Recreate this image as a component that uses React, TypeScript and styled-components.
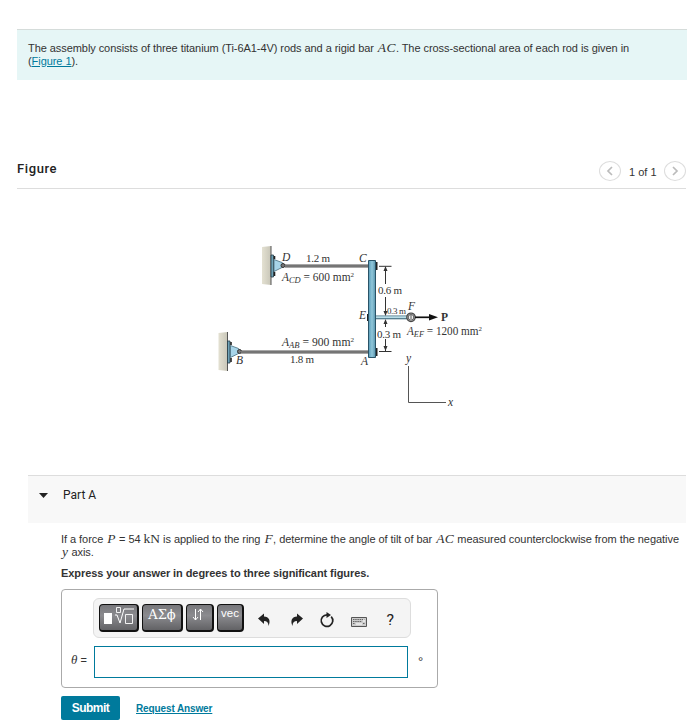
import React, { useState } from 'react';
import styled, { createGlobalStyle } from 'styled-components';

const GlobalStyle = createGlobalStyle`
  body {
    margin: 0;
    background: #fff;
    color: #333;
    font-family: "Liberation Sans", Arial, sans-serif;
    font-size: 11px;
  }
  * {
    box-sizing: border-box;
  }
`;

const Page = styled.main`
  width: 696px;
  height: 725px;
  padding: 29px 9px 0 17px;
  overflow: hidden;
`;

const Intro = styled.section`
  height: 51px;
  padding: 12px 11px 0;
  border-top: 1px solid #d5dcda;
  background: #e6f6f6;
`;

const Line = styled.div<{ $spacing?: number }>`
  height: 13px;
  line-height: 13px;
  white-space: nowrap;
  letter-spacing: ${({ $spacing = -0.065 }) => $spacing}px;
`;

const Var = styled.i`
  margin-left: 1px;
  font-family: "Liberation Serif", "Times New Roman", serif;
  font-size: 13.5px;
  line-height: 1px;
  letter-spacing: 0.4px;
`;

const Unit = styled(Var)`
  margin: 0;
  font-style: normal;
  letter-spacing: 0;
`;

const Link = styled.a`
  color: #007a9c;
  text-decoration: underline;
`;

const FigureHeader = styled.header`
  display: flex;
  justify-content: space-between;
  height: 109px;
  margin-right: 1px;
  padding-top: 80px;
  border-bottom: 1px solid #ddd;
`;

const FigureTitle = styled.h2`
  margin: 1px 0 0;
  color: #222;
  font-family: Roboto, sans-serif;
  font-size: 13px;
  font-weight: 500;
  line-height: 16px;
  letter-spacing: 0.6px;
`;

const Pager = styled.nav`
  display: flex;
  align-items: center;
  height: 22px;
  gap: 8px;
`;

const PagerButton = styled.button`
  display: flex;
  align-items: center;
  justify-content: center;
  width: 22px;
  height: 20px;
  padding: 0;
  border: 1px solid #ddd;
  border-radius: 50%;
  background: #fff;
`;

const PagerText = styled.span`
  width: 27px;
  padding-top: 2px;
  white-space: nowrap;
`;

const Diagram = styled.svg`
  display: block;
  width: 670px;
  height: 286px;
  font-family: "Liberation Serif", "Times New Roman", serif;
  font-size: 11.5px;
`;

const PartHeader = styled.header`
  display: flex;
  align-items: flex-start;
  width: 658px;
  height: 48px;
  margin-left: 11px;
  padding: 12px 0 0 11px;
  border-top: 1px solid #ddd;
  background: #f8f8f8;
`;

const PartTitle = styled.h2`
  margin: 0 0 0 15px;
  color: #222;
  font-family: Roboto, sans-serif;
  font-size: 12px;
  font-weight: 400;
  line-height: 14px;
`;

const PartBody = styled.section`
  padding: 10px 0 0 44px;
`;

const Instruction = styled.p`
  margin: 8px 0 9px;
  font-weight: 700;
  line-height: 13px;
  letter-spacing: -0.08px;
`;

const AnswerBox = styled.div`
  width: 377px;
  height: 99px;
  padding: 8px 0 0 9px;
  border: 1px solid #aaa;
  border-radius: 4px;
`;

const Toolbar = styled.div`
  display: flex;
  align-items: flex-start;
  gap: 3px;
  width: 318px;
  height: 40px;
  margin-left: 22px;
  padding: 5px;
  border: 1px solid #ddd;
  border-radius: 6px;
  background: #f4f4f4;
`;

const ToolButton = styled.button<{ $width: number; $serif?: boolean }>`
  display: flex;
  justify-content: center;
  width: ${({ $width }) => $width}px;
  height: 28px;
  padding: 2px 0 0;
  border: 1px solid #111;
  border-width: 1px 2px 2px 1px;
  border-radius: 4px;
  background: linear-gradient(#77777b, #8b8b8f 42%, #626265);
  color: #fff;
  font-family: ${({ $serif }) => ($serif ? '"DejaVu Serif", serif' : '"Liberation Sans", sans-serif')};
  font-size: ${({ $serif }) => ($serif ? 13 : 11.5)}px;
  line-height: ${({ $serif }) => ($serif ? 16 : 13)}px;
`;

const ToolIcons = styled.div`
  width: 144px;
  height: 28px;
  margin-left: 8px;
  padding-top: 6px;
`;

const InputRow = styled.label`
  display: flex;
  align-items: center;
  height: 32px;
  margin-top: 8px;
`;

const InputLabel = styled.span`
  width: 23px;
  padding-bottom: 4px;
  white-space: nowrap;
`;

const Theta = styled(Var)`
  margin: 0;
  font-size: 13px;
  letter-spacing: 0;
`;

const AnswerInput = styled.input`
  width: 314px;
  height: 32px;
  padding: 0 6px;
  border: 1px solid #007a9c;
  outline: 0;
  background: #fff;
`;

const Degree = styled.span`
  margin: -2px 0 0 10px;
  font-size: 13px;
`;

const Actions = styled.div`
  display: flex;
  align-items: center;
  gap: 16px;
  height: 24px;
  margin-top: 8px;
`;

const SubmitButton = styled.button`
  width: 59px;
  height: 24px;
  padding: 0;
  border: 0;
  border-radius: 2px;
  background: #007a9c;
  color: #fff;
  font-family: "Liberation Sans", sans-serif;
  font-size: 12px;
  font-weight: 700;
  letter-spacing: -0.5px;
`;

const RequestLink = styled(Link)`
  font-size: 10px;
  font-weight: 700;
  letter-spacing: -0.12px;
`;

const Chevron = ({ flip }: { flip?: boolean }) => (
  <svg width="8" height="10" viewBox="0 0 8 10" fill="none" stroke="#bbb" strokeWidth="1.7">
    <path d={flip ? 'M2 1l4 4-4 4' : 'M6 1L2 5l4 4'} />
  </svg>
);

const Support = ({ x, y }: { x: number; y: number }) => (
  <g transform={`translate(${x} ${y})`}>
    <path d="M0 1L9 0v39L0 38z" fill="url(#wall)" />
    <path d="M9 0v39" stroke="#555" />
    <path d="M9 9h2.5v22H9z" fill="#6fa3b8" stroke="#263b45" strokeWidth=".8" />
    <path d="M12.5 10v3m0 13v4" stroke="#222" strokeWidth="1.6" />
    <path d="M12 13.5l8 3q4 3 0 5l-8 4z" fill="#a7d4e8" stroke="#456c7d" strokeWidth=".8" />
    <circle cx="21" cy="19.5" r="2" fill="#777" stroke="#333" />
  </g>
);

type AreaProps = { x: number; y: number; sub: string; value: string; width: number };

const AreaLabel = ({ x, y, sub, value, width }: AreaProps) => (
  <text x={x} y={y} textLength={width} lengthAdjust="spacingAndGlyphs">
    <tspan fontStyle="italic">A</tspan>
    <tspan fontStyle="italic" fontSize="8.5" dy="2">{sub}</tspan>
    <tspan dy="-2">{` = ${value} mm`}</tspan>
    <tspan fontSize="7" dy="-4">2</tspan>
  </text>
);

const RodDiagram = () => (
  <Diagram viewBox="17 189 670 286" fill="#333">
    <defs>
      <linearGradient id="wall"><stop stopColor="#e4e1d2" /><stop offset="1" stopColor="#c8c6b8" /></linearGradient>
      <linearGradient id="bar"><stop stopColor="#569ab7" /><stop offset=".5" stopColor="#91c7da" /><stop offset="1" stopColor="#5794ad" /></linearGradient>
    </defs>
    <Support x={262} y={246} />
    <Support x={218.5} y={332} />
    <path d="M285 266h83M241 352h127" stroke="#505050" strokeWidth="3.2" />
    <path d="M285 266h83M241 352h127" stroke="#999" strokeWidth="1.2" />
    <path d="M375 262h2.5v8H375zM375 348h2.5v8H375zM367 314h2v7h-2z" fill="#222" />
    <path d="M368.5 260.5h7v97h-7z" fill="url(#bar)" stroke="#2a5367" />
    <path d="M376 317.4h32" stroke="#456f81" strokeWidth="3.8" />
    <path d="M376 317.2h32" stroke="#b8dce7" strokeWidth="1.9" />
    <circle cx="411" cy="317.3" r="3.6" fill="#eee" stroke="#444" strokeWidth="2.5" />
    <circle cx="411" cy="317.3" r="3.4" fill="none" stroke="#aaa" strokeWidth=".8" />
    <path d="M411 315v4" stroke="#555" />
    <path d="M415 317.3h15" stroke="#111" strokeWidth="1.7" />
    <path d="M429 314l9 3.3-9 3.3z" fill="#111" />
    <path d="M379 266.3h12.5M379 351.5h12.5M385.5 267v17M385.5 297v18M385.5 320v7M385.5 339v12" stroke="#333" fill="none" />
    <path d="M385.5 266l-2 5h4zM385.5 316l-2-5h4zM385.5 319l-2 5h4zM385.5 351l-2-5h4z" />
    <path d="M408.5 366v36.5H446" fill="none" stroke="#555" />
    <g fontStyle="italic">
      <text x="282" y="261">D</text>
      <text x="359" y="262">C</text>
      <text x="359" y="319">E</text>
      <text x="236" y="364">B</text>
      <text x="361" y="365">A</text>
      <text x="408" y="310">F</text>
      <text x="406" y="362">y</text>
      <text x="448" y="405.5">x</text>
    </g>
    <g fontSize="11">
      <text x="306" y="262" textLength="24">1.2 m</text>
      <text x="290" y="363" textLength="24">1.8 m</text>
      <text x="378" y="294" textLength="24">0.6 m</text>
      <text x="377" y="338" textLength="24">0.3 m</text>
    </g>
    <text x="387" y="314" fontSize="9" textLength="19">0.3 m</text>
    <AreaLabel x={282} y={281} sub="CD" value="600" width={72} />
    <AreaLabel x={282} y={346} sub="AB" value="900" width={72} />
    <AreaLabel x={407} y={335} sub="EF" value="1200" width={75} />
    <text x="441" y="321" fontWeight="700">P</text>
  </Diagram>
);

const EditIcons = () => (
  <svg width="144" height="22" viewBox="0 0 144 22" fill="#222">
    <path d="M3 8.5L9 3.5v3c5 .3 7 4 4.5 9.5 0-3.5-1.5-5-4.5-5v3z" />
    <path d="M48 8.5l-6-5v3c-5 .3-7 4-4.5 9.5 0-3.5 1.5-5 4.5-5v3z" />
    <path d="M76.2 6.6a5.8 5.8 0 1 1-4.2-1.8" fill="none" stroke="#222" strokeWidth="1.7" />
    <path d="M71.5 2l4.5 3-4.5 3z" />
    <path d="M96.5 7.5h15v9h-15z" fill="#ccc" stroke="#555" />
    <path d="M98 9.5h12M98 11.5h9M98 13.5h2m8 0h2" stroke="#666" strokeDasharray="1.5 .7" />
    <path d="M101 14h6M109 9v3" stroke="#fff" />
    <text x="131.5" y="14.5" fontSize="15" fontFamily="Roboto" textLength="7.5" lengthAdjust="spacingAndGlyphs">?</text>
  </svg>
);

const App = () => {
  const [answer, setAnswer] = useState('');

  return (
    <Page>
      <GlobalStyle />
      <Intro>
        <Line>The assembly consists of three titanium (Ti-6A1-4V) rods and a rigid bar <Var>AC</Var>. The cross-sectional area of each rod is given in</Line>
        <Line>(<Link href="#figure">Figure 1</Link>).</Line>
      </Intro>
      <FigureHeader id="figure">
        <FigureTitle>Figure</FigureTitle>
        <Pager>
          <PagerButton aria-label="Previous"><Chevron /></PagerButton>
          <PagerText>1 of 1</PagerText>
          <PagerButton aria-label="Next"><Chevron flip /></PagerButton>
        </Pager>
      </FigureHeader>
      <RodDiagram />
      <PartHeader>
        <svg width="9" height="14" viewBox="0 0 9 14"><path d="M0 5h9L4.5 10z" fill="#222" /></svg>
        <PartTitle>Part A</PartTitle>
      </PartHeader>
      <PartBody>
        <Line $spacing={-0.048}>If a force <Var>P</Var> = 54 <Unit>kN</Unit> is applied to the ring <Var>F</Var>, determine the angle of tilt of bar <Var>AC</Var> measured counterclockwise from the negative</Line>
        <Line><Var>y</Var> axis.</Line>
        <Instruction>Express your answer in degrees to three significant figures.</Instruction>
        <AnswerBox>
          <Toolbar>
            <ToolButton $width={40} aria-label="Templates">
              <svg width="32" height="20" viewBox="0 0 32 20" fill="none" stroke="#fff">
                <path d="M1 6h8v11H1z" fill="#fff" stroke="none" />
                <path d="M13.5.5h4v5h-4zM22.5 7.5h7v9h-7z" strokeWidth=".9" />
                <path d="M12 8h2l3 8 4-14h10" />
              </svg>
            </ToolButton>
            <ToolButton $width={41} $serif>ΑΣϕ</ToolButton>
            <ToolButton $width={28} aria-label="Arrows">
              <svg width="18" height="15" viewBox="0 0 18 15" fill="none" stroke="#fff">
                <path d="M4.5 2v11M2 10l2.5 3L7 10M9.5 13V2M7 5l2.5-3L12 5" />
              </svg>
            </ToolButton>
            <ToolButton $width={27}>vec</ToolButton>
            <ToolIcons>
              <EditIcons />
            </ToolIcons>
          </Toolbar>
          <InputRow>
            <InputLabel><Theta>θ</Theta> =</InputLabel>
            <AnswerInput value={answer} onChange={(e) => setAnswer(e.target.value)} />
            <Degree>°</Degree>
          </InputRow>
        </AnswerBox>
        <Actions>
          <SubmitButton>Submit</SubmitButton>
          <RequestLink href="#request">Request Answer</RequestLink>
        </Actions>
      </PartBody>
    </Page>
  );
};

export default App;
